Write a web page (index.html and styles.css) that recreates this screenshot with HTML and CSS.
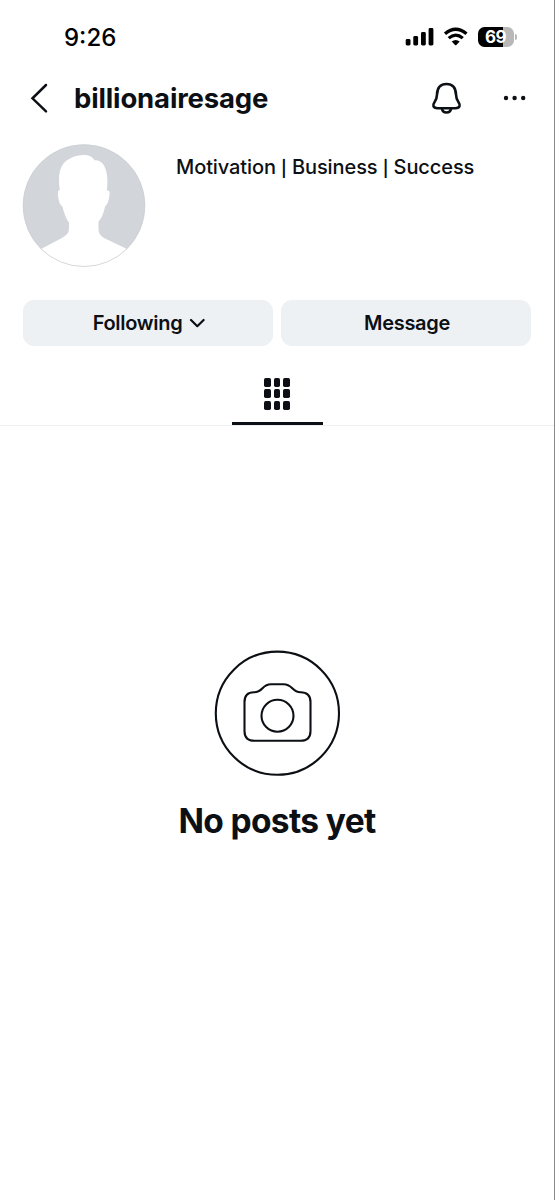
FILE: index.html
```html
<!DOCTYPE html>
<html lang="en">
<head>
<meta charset="utf-8">
<title>billionairesage</title>
<link rel="stylesheet" href="styles.css">
</head>
<body>
<main class="screen">
  <div class="status">
    <span class="time">9:26</span>
    <div class="indicators">
      <svg class="signal" viewBox="405 27 30 20" width="30" height="20"><rect x="405.7" y="39" width="4.8" height="6.5" rx="1.4"/><rect x="413.3" y="36" width="4.8" height="9.5" rx="1.4"/><rect x="421" y="32" width="4.8" height="13.5" rx="1.4"/><rect x="428.6" y="28" width="4.8" height="17.5" rx="1.4"/></svg>
      <svg class="wifi" viewBox="443 27 26 20" width="26" height="20"><path d="M445 33.8Q455.700 24.700 466.500 33.800" stroke-width="3.300"/><path d="M448.700 38.100Q455.700 32 462.800 38.100" stroke-width="3.200"/><path class="dot" d="M451.700 41.600Q455.700 38.400 459.700 41.600L456.400 45Q455.700 45.600 455 45Z"/></svg>
      <div class="battery"><span class="level">69</span><i class="tip"></i></div>
    </div>
  </div>
  <header class="header">
    <svg class="back" viewBox="30 82 18 32" width="18" height="32"><path d="M46 85L32.500 98.300L46 111.300"/></svg>
    <h1 class="username">billionairesage</h1>
    <svg class="bell" viewBox="430 81 33 34" width="33" height="34"><path d="M446.500 84C439.500 84 437.200 89 437 94.500C436.900 98.300 436.200 100 434.500 102.200C432.300 105.200 433 108.200 437.500 108.200H455.500C460 108.200 460.700 105.200 458.500 102.200C456.800 100 456.100 98.300 456 94.500C455.800 89 453.500 84 446.500 84Z"/><path d="M441.900 108.400C442.600 113.900 450.400 113.900 451.100 108.400"/></svg>
    <svg class="more" viewBox="502 94 26 8" width="26" height="8"><circle cx="506" cy="98" r="2.200"/><circle cx="514.600" cy="98" r="2.200"/><circle cx="523.200" cy="98" r="2.200"/></svg>
  </header>
  <section class="profile">
    <svg class="avatar" viewBox="22 144 124 124" width="124" height="124">
      <defs><clipPath id="round"><circle cx="84" cy="205.600" r="61"/></clipPath></defs>
      <g clip-path="url(#round)"><rect class="backdrop" x="22" y="144" width="124" height="124"/>
      <path class="person" d="M40 249.500L61 238.500Q69 234.500 69 229V222.500C66 219 63.500 211 62.500 206.500C59 205.500 57.500 195 58 191.500Q58.200 190 59.800 190.500C58.500 180 58.500 171 62.500 165C67 158 78 154 87 155.200Q91.500 155.700 94.500 160.300Q98 159.500 101.500 162.500C107.500 167.500 108.200 181 106.800 190.500Q109.300 190 109.500 192C109.800 196 108 205 105.200 206C104.200 211 102 218 98.500 221.500V229Q98.500 235 104 238L128 249.500V270H40Z"/></g>
      <circle class="rim" cx="84" cy="205.600" r="60.900"/>
    </svg>
    <p class="bio">Motivation <span class="bar">|</span> Business <span class="bar">|</span> Success</p>
  </section>
  <div class="actions">
    <div class="button"><span>Following</span><svg class="chevron" viewBox="190 317 16 12" width="16" height="12"><path d="M192 320L198.300 326.200L204.600 320"/></svg></div>
    <div class="button"><span>Message</span></div>
  </div>
  <nav class="tabs">
    <div class="tab"><div class="grid"><i></i><i></i><i></i><i></i><i></i><i></i><i></i><i></i><i></i></div></div>
  </nav>
  <section class="empty">
    <svg class="camera" viewBox="214 650 127 127" width="127" height="127"><circle cx="277.400" cy="713.200" r="61.600"/><path d="M254 692.200C263.500 692.200 261.500 684.200 271 684.200H283.500C293 684.200 291.500 692.200 300.500 692.200Q310.500 692.200 310.500 702V731Q310.500 740.800 300.500 740.800H254.500Q244.500 740.800 244.500 731V702Q244.500 692.200 254 692.200Z"/><circle cx="277.500" cy="715.800" r="16"/></svg>
    <h2 class="message">No posts yet</h2>
  </section>
</main>
</body>
</html>
```
FILE: styles.css
```css
* { box-sizing: border-box; margin: 0; padding: 0; }
body { background: #fff; color: #0c1014; font-family: Inter, "Liberation Sans", sans-serif; }
svg { display: block; flex: none; fill: none; }
.screen { width: 555px; height: 1200px; border-right: 1px solid #88898b; overflow: hidden; }
.status { display: flex; align-items: center; justify-content: space-between; height: 74px; padding: 0 37px 0 64px; color: #000; }
.time { font-size: 24px; font-weight: 500; letter-spacing: 0; }
.indicators { display: flex; align-items: center; }
.signal { fill: #000; margin-right: 8px; }
.wifi { stroke: #000; margin-right: 9px; }
.wifi .dot { fill: #000; stroke: none; }
.battery { display: flex; align-items: center; gap: 1px; }
.level { width: 36px; height: 20px; border-radius: 6.5px; background: linear-gradient(to right, #000 69%, #b8b8b8 69%); color: #fff; font-size: 17px; font-weight: 700; letter-spacing: -.6px; line-height: 20px; text-align: center; padding-right: 1px; }
.tip { width: 2px; height: 6px; border-radius: 0 2px 2px 0; background: #b8b8b8; }
.header { display: flex; align-items: center; height: 48px; padding: 0 26px 0 30px; }
.back { stroke: #0c1014; stroke-width: 2.5; stroke-linecap: round; stroke-linejoin: miter; }
.username { margin-left: 26px; flex: 1; font-size: 27.5px; line-height: 48px; font-weight: 700; letter-spacing: -.15px; white-space: nowrap; }
.bell { stroke: #0c1014; stroke-width: 2.6; margin-right: 39px; }
.more { fill: #0c1014; }
.profile { display: flex; height: 178px; padding: 22px 0 0 22px; }
.backdrop { fill: #d2d6db; }
.person { fill: #fff; }
.rim { stroke: #c9cbce; stroke-width: .7; }
.bio { margin: 10px 0 0 30px; font-size: 20px; line-height: 26px; font-weight: 550; letter-spacing: -.1px; white-space: nowrap; }
.bar { font-size: 16px; font-weight: 600; line-height: 1; }
.actions { display: grid; grid-template-columns: 1fr 1fr; gap: 8px; padding: 0 23px; height: 46px; }
.button { display: flex; align-items: center; justify-content: center; gap: 7px; padding-left: 2px; border-radius: 11px; background: #eef1f4; font-size: 20px; font-weight: 600; letter-spacing: -.3px; }
.chevron { stroke: #0c1014; stroke-width: 2.2; stroke-linecap: round; stroke-linejoin: round; }
.tabs { display: flex; justify-content: center; height: 80px; border-bottom: 1px solid #eeeff0; }
.tab { width: 91px; height: 79px; padding-top: 32px; border-bottom: 3px solid #0c1014; }
.grid { display: grid; width: 26px; margin: 0 auto; grid-template-columns: repeat(3, 6.8px); grid-auto-rows: 8.8px; gap: 2.7px 2.8px; }
.grid i { border-radius: 1.7px; background: #0c1014; }
.empty { display: flex; flex-direction: column; align-items: center; padding-top: 224px; }
.camera { stroke: #0c1014; stroke-width: 2.1; }
.message { margin-top: 22px; font-size: 33.5px; line-height: 44px; font-weight: 700; letter-spacing: -.65px; }
```
